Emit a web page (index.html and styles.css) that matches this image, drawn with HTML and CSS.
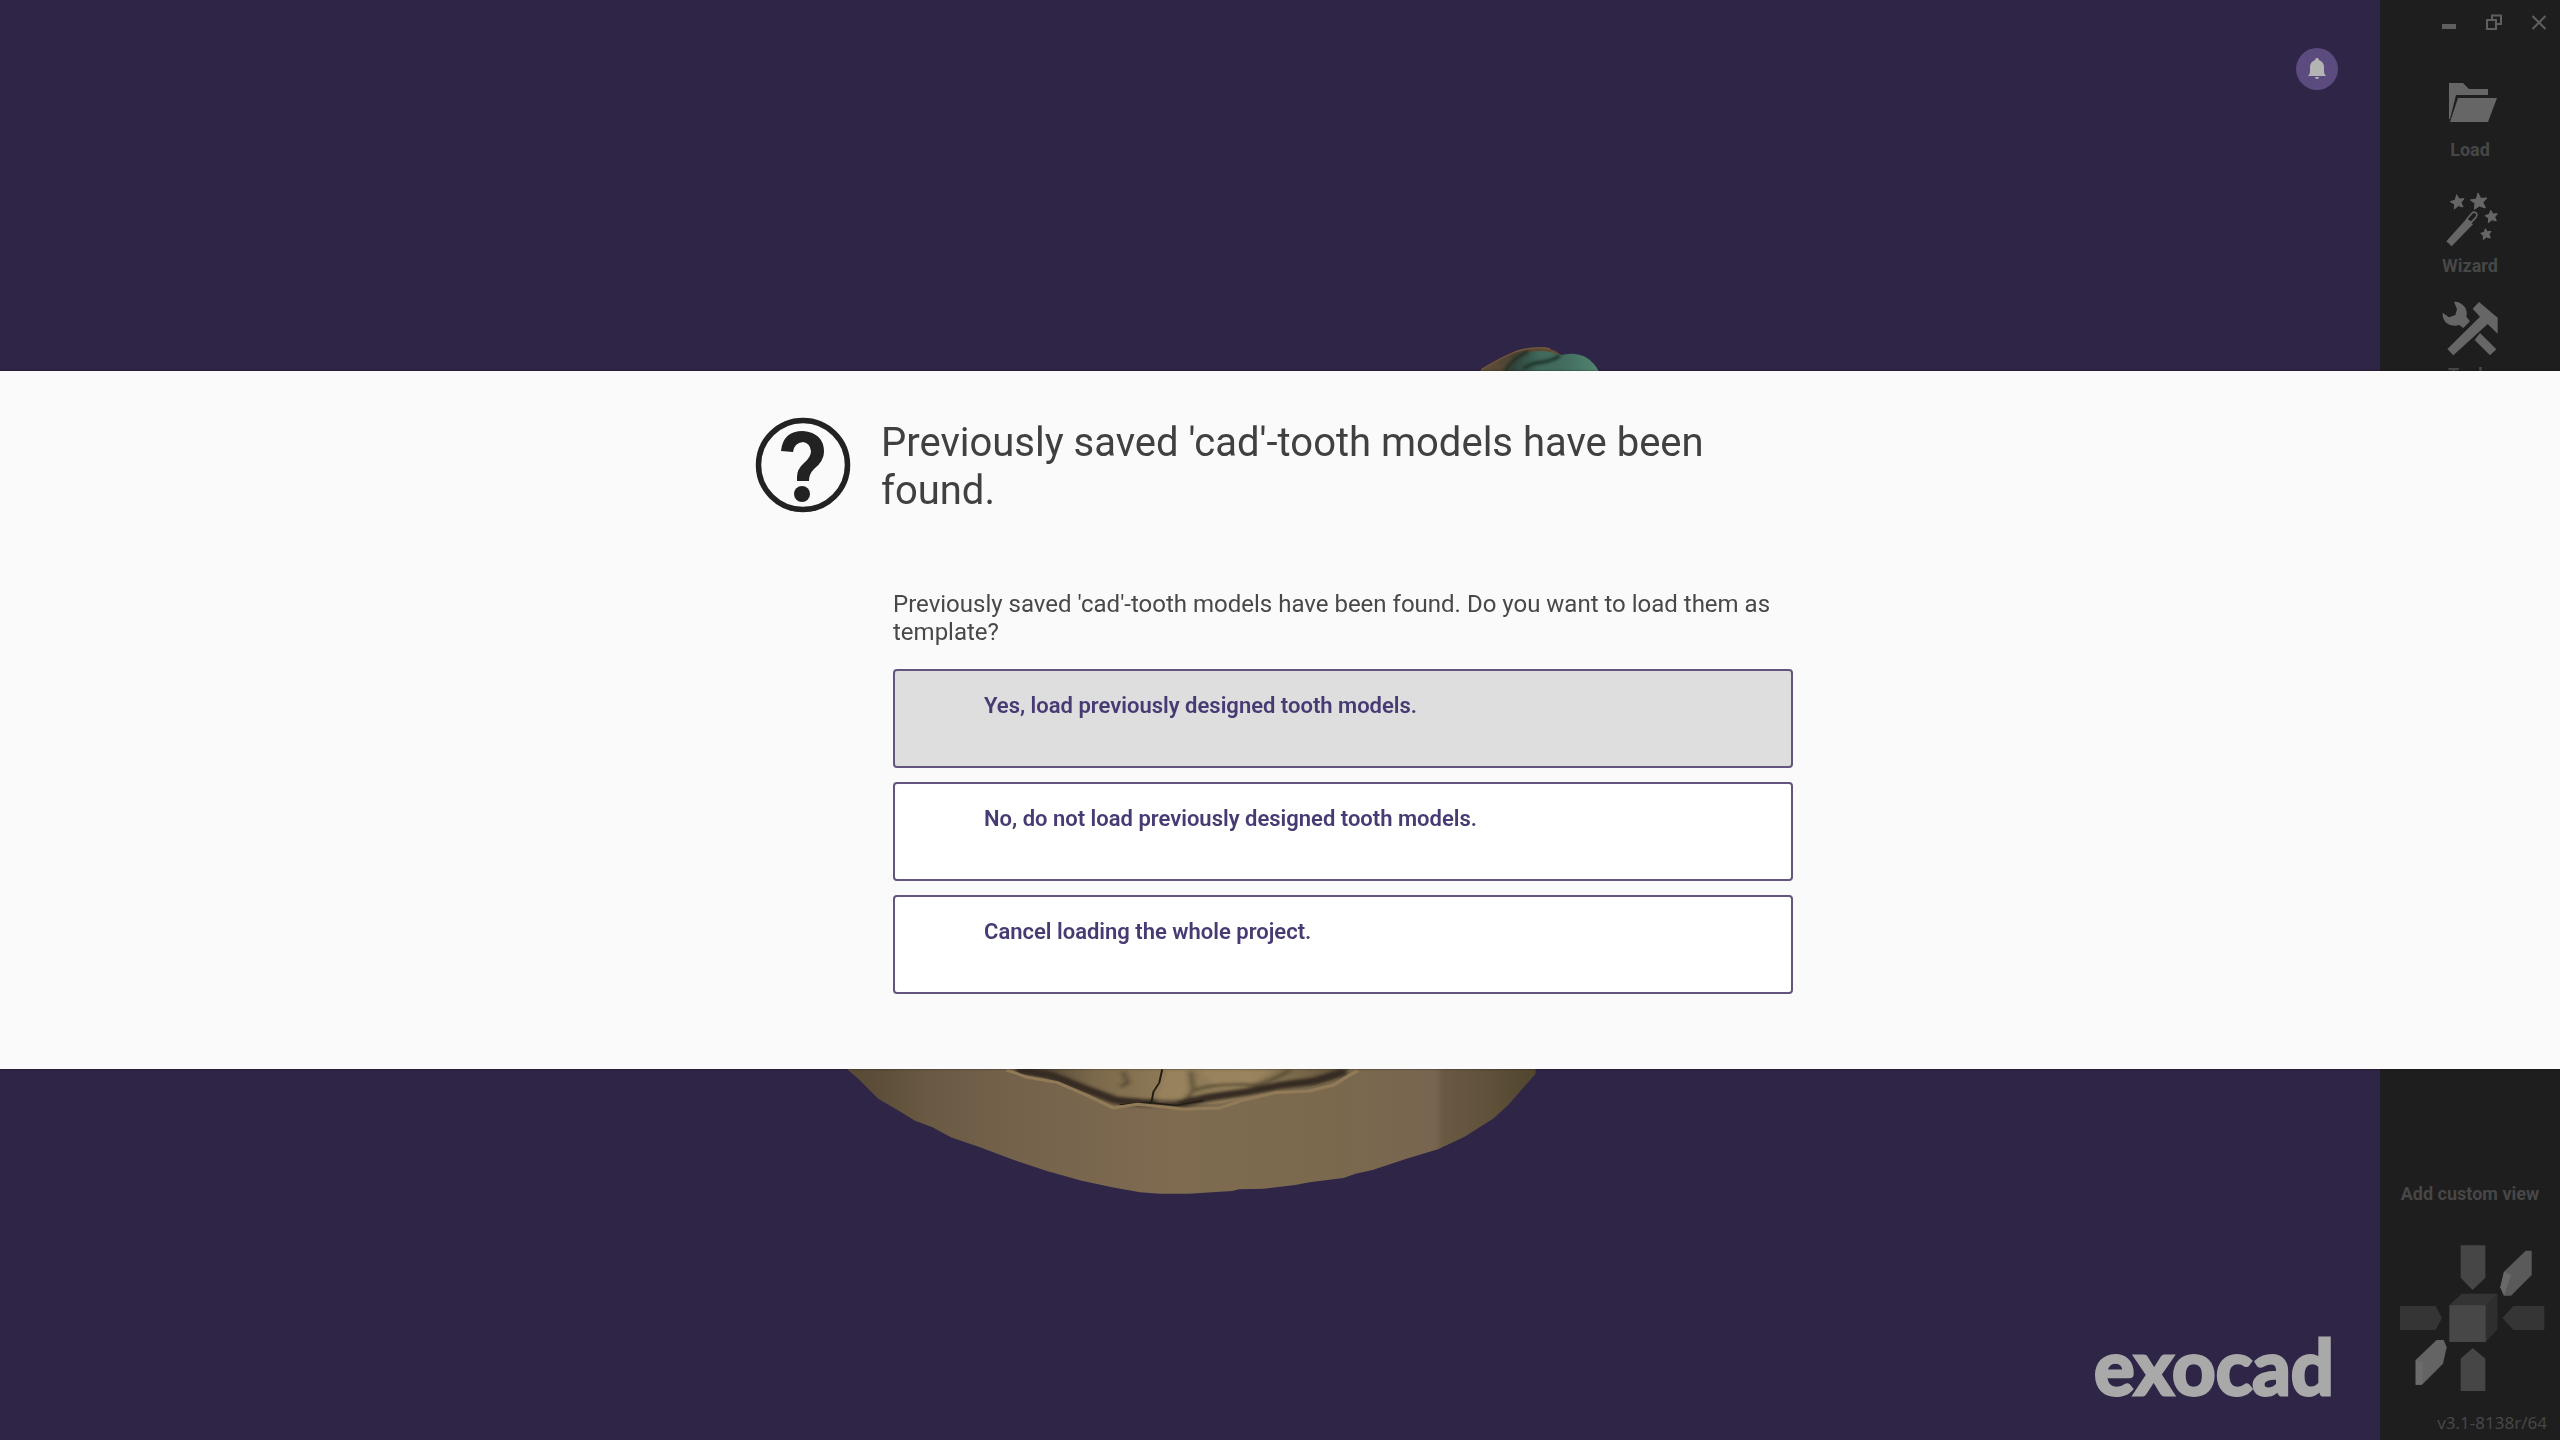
FILE: index.html
```html
<!DOCTYPE html>
<html lang="en">
<head>
<meta charset="utf-8">
<title>exocad</title>
<link rel="stylesheet" href="styles.css">
</head>
<body>
<div class="app">
  <main class="viewport">
    <svg class="model" viewBox="0 0 2380 1440" preserveAspectRatio="xMidYMid slice" aria-hidden="true">
      <defs>
        <linearGradient id="base" x1="0" x2="1" y1="0" y2="0">
          <stop offset="0" stop-color="#584a36"/>
          <stop offset=".05" stop-color="#5b4d38"/>
          <stop offset=".13" stop-color="#6a5a43"/>
          <stop offset=".25" stop-color="#75624c"/>
          <stop offset=".48" stop-color="#7e6b50"/>
          <stop offset=".7" stop-color="#7b694e"/>
          <stop offset=".855" stop-color="#776550"/>
          <stop offset=".865" stop-color="#6b5a43"/>
          <stop offset=".93" stop-color="#5f513a"/>
          <stop offset="1" stop-color="#51452f"/>
        </linearGradient>
        <linearGradient id="floor" x1="0" x2="1" y1="0" y2="0">
          <stop offset="0" stop-color="#3b3226"/>
          <stop offset=".25" stop-color="#7b694b"/>
          <stop offset=".45" stop-color="#8d7956"/>
          <stop offset=".7" stop-color="#927e5a"/>
          <stop offset="1" stop-color="#5c4e38"/>
        </linearGradient>
        <linearGradient id="gum" x1="0" x2="1" y1="0" y2="0">
          <stop offset="0" stop-color="#66503a"/>
          <stop offset=".4" stop-color="#4c4232"/>
          <stop offset="1" stop-color="#6a5037"/>
        </linearGradient>
        <linearGradient id="crown" x1="0" x2="1" y1="0" y2="0">
          <stop offset="0" stop-color="#2b3d35"/>
          <stop offset=".35" stop-color="#41695b"/>
          <stop offset=".6" stop-color="#426c5e"/>
          <stop offset="1" stop-color="#528672"/>
        </linearGradient>
        <filter id="soft" x="-10%" y="-30%" width="120%" height="160%"><feGaussianBlur stdDeviation="5"/></filter>
      </defs>
      <g transform="translate(1460 330) scale(.3333)">
        <path fill="url(#gum)" d="M58 130L62 120L110 92L160 66L205 53L255 51L285 62L310 78V130Z"/>
        <path fill="url(#crown)" d="M145 130Q168 84 210 67Q250 55 300 76Q345 64 378 82Q404 98 420 130Z"/>
        <path fill="none" stroke="#1f332c" stroke-width="10" filter="url(#soft)" d="M135 124Q160 82 205 64M190 116Q220 96 250 96Q285 90 300 76"/>
        <path fill="none" stroke="#735a3b" stroke-width="4" d="M64 119Q120 84 165 66Q215 48 270 56"/>
      </g>
      <g transform="translate(820 1050) scale(.4847 .3333)">
        <path fill="url(#base)" d="M40 30L58 60L80 88L120 146L160 180L196 212L232 232L270 262L330 292L400 330L470 364L540 392L600 411L660 427L700 431L760 431L850 423L865 418L915 416L980 405L1010 397L1080 384L1105 371L1140 360L1210 326L1275 298L1330 260L1390 205L1420 165L1450 115L1476 72L1478 30Z"/>
        <path fill="url(#floor)" d="M385 30L410 62L500 98L560 140L615 170L660 162L740 167L830 160L900 138L1010 110L1060 88L1100 50V30Z"/>
        <g filter="url(#soft)" fill="none" stroke="#342b20">
          <path stroke-width="22" d="M405 60L475 75L550 118L610 151L665 158L750 160L800 143L880 126L950 106L1020 93L1085 64"/>
          <path stroke-width="8" opacity=".6" d="M765 65L770 120L750 160M625 65L635 98L620 110M775 120Q820 95 900 105Q945 85 970 60"/>
        </g>
        <path fill="#a08a63" opacity=".5" filter="url(#soft)" d="M715 60H755L760 125L735 158H692ZM785 60H940L890 98L810 102Z"/>
        <path fill="none" stroke="#211b14" stroke-width="4" d="M706 58L700 98L688 125L684 156M618 164L680 158L735 166L790 152"/>
        <path fill="none" stroke="#917a57" stroke-width="9" stroke-linejoin="round" d="M385 60L425 81L490 98L550 136L605 174L655 163L705 170L750 178L825 174L870 152L940 128L1010 123L1060 105L1090 78L1110 62"/>
      </g>
    </svg>
    <button class="bell" type="button" aria-label="Notifications">
      <svg viewBox="0 0 20 22" width="20" height="22"><path fill="#b4b4b4" d="M8 2a2 2 0 0 1 4 0Q17 4 17 9V14Q17 16 19 18H1Q3 16 3 14V9Q3 4 8 2ZM8 19H12A2 2 0 0 1 8 19Z"/></svg>
    </button>
    <div class="brand">exocad</div>
  </main>

  <aside class="sidebar">
    <div class="window-controls">
      <button type="button" aria-label="Minimize"><svg viewBox="0 0 16 16" width="16" height="16"><path fill="#5f5f5f" d="M1 10H15V15H1Z"/></svg></button>
      <button type="button" aria-label="Restore"><svg viewBox="0 0 16 16" width="16" height="16"><path fill="none" stroke="#5f5f5f" stroke-width="2" d="M1 6H10V15H1ZM6 5V1.500H15V10H11"/></svg></button>
      <button type="button" aria-label="Close"><svg viewBox="0 0 16 16" width="16" height="16"><path fill="none" stroke="#5f5f5f" stroke-width="2" d="M1.500 2L14.500 15M14.500 2L1.500 15"/></svg></button>
    </div>
    <nav class="tools">
      <button class="tool tool-load" type="button">
        <svg viewBox="0 0 56 56" width="56" height="56"><path fill="#666" d="M7 7H21L27 13H46V19H14L8 43H7ZM16 22H55L46 46H8Z"/></svg>
        <span>Load</span>
      </button>
      <button class="tool" type="button">
        <svg viewBox="245 36 168 168" width="56" height="56">
          <path fill="#666" d="M258 184L318 117L338 133L274 199Z"/>
          <path fill="none" stroke="#666" stroke-width="5" stroke-linejoin="round" d="M319 118L336 98Q343 94 349 101Q352 106 347 112L333 127Z"/>
          <g fill="#666" stroke="#666" stroke-width="3">
            <path d="M289 44L296 57L311 56L302 68L308 81L294 77L282 87L283 73L270 65L285 60Z"/>
            <path d="M353 39L361 55L380 54L368 67L375 84L357 78L342 88L344 70L330 60L348 57Z"/>
            <path d="M391 91L398 102L411 101L403 111L408 123L395 119L384 128L385 114L374 107L387 103Z"/>
            <path d="M375 146L381 155L392 154L386 163L390 174L378 171L369 179L369 167L361 160L372 157Z"/>
          </g>
        </svg>
        <span>Wizard</span>
      </button>
      <button class="tool" type="button">
        <svg viewBox="246 363 168 168" width="56" height="56">
          <path fill="#666" d="M282 365Q302 364 315 382Q323 397 319 410L330 424L310 444L298 435Q276 442 258 428Q246 414 248 398L267 412L286 405L291 388Z"/>
          <path fill="#666" d="M360 459L409 508L390 526L344 480Z"/>
          <path fill="#666" d="M357 366L413 413V461L383 432L280 526L262 507L360 410L338 386Z"/>
        </svg>
        <span>Tools</span>
      </button>
    </nav>
    <div class="views">
      <button class="add-view" type="button">Add custom view</button>
      <svg class="cube" viewBox="90 250 435 450" width="145" height="150" role="img" aria-label="View directions">
        <path fill="#464646" d="M272 257H346V354L308 391L272 354ZM308 565L346 597V694H272V597Z"/>
        <path fill="#353535" d="M90 439H197L216 475L197 511H90ZM397 475L430 439H523V511H430Z"/>
        <path fill="#343434" d="M238 437L275 402H382V508L347 547Z"/>
        <path fill="#2e2e2e" d="M347 437L382 402V508L347 547Z"/>
        <path fill="#474747" d="M238 437H347V547H238Z"/>
        <path fill="#5a5a5a" d="M467 273H485V346L423 408H402L391 383L402 336Z"/>
        <path fill="#696969" d="M402 336L423 346L402 408L391 383Z"/>
        <path fill="#646464" d="M200 541H221L230 563L219 612L156 675H137V601Z"/>
        <path fill="#6b6b6b" d="M137 601L160 608L156 675H137Z"/>
      </svg>
      <p class="version">v3.1-8138r/64</p>
    </div>
  </aside>
</div>

<div class="overlay">
  <section class="dialog" role="dialog" aria-modal="true" aria-labelledby="dialog-title">
    <div class="dialog-body">
      <svg class="question" viewBox="0 0 96 96" width="96" height="96" aria-hidden="true">
        <circle cx="48" cy="48" r="44.500" fill="none" stroke="#222" stroke-width="5.500"/>
        <path fill="#222" d="M26 34Q28 14 48 14Q69 16 69 35Q69 44 59 52Q54 57 54 64H42V60Q42 52 49 46Q56 40 56 34Q55 26 48 25Q39 26 38 35Z"/>
        <circle cx="47" cy="77" r="8" fill="#222"/>
      </svg>
      <h1 id="dialog-title">Previously saved 'cad'-tooth models have been found.</h1>
      <div class="choices">
        <p>Previously saved 'cad'-tooth models have been found. Do you want to load them as template?</p>
        <button class="choice choice-active" type="button">Yes, load previously designed tooth models.</button>
        <button class="choice" type="button">No, do not load previously designed tooth models.</button>
        <button class="choice" type="button">Cancel loading the whole project.</button>
      </div>
    </div>
  </section>
</div>
</body>
</html>
```
FILE: styles.css
```css
* {
  box-sizing: border-box;
}

body {
  margin: 0;
  background: #2f2546;
  font-family: Roboto, "Noto Sans", sans-serif;
}

button {
  border: 0;
  padding: 0;
  background: none;
  color: inherit;
  font: inherit;
}

svg {
  display: block;
}

.app {
  display: grid;
  grid-template-columns: minmax(0, 1fr) 180px;
  min-height: 100vh;
}

/* 3D viewport */
.viewport {
  position: relative;
  display: flex;
  flex-direction: column;
  justify-content: space-between;
  align-items: flex-end;
  padding: 48px 42px 34px;
  overflow: hidden;
}

.model {
  position: absolute;
  inset: 0;
  width: 100%;
  height: 100%;
}

.bell {
  position: relative;
  display: grid;
  place-items: center;
  width: 42px;
  height: 42px;
  border-radius: 50%;
  background: #5b4b7e;
}

.brand {
  position: relative;
  padding-right: 4px;
  color: #a9a9a9;
  font-family: Lato, "Liberation Sans", sans-serif;
  font-size: 76px;
  font-weight: 700;
  line-height: 80px;
  -webkit-text-stroke: 3px #a9a9a9;
  stroke-linejoin: round;
}

/* Sidebar */
.sidebar {
  display: flex;
  flex-direction: column;
  background: #1e1e1e;
  color: #474747;
}

.window-controls {
  display: flex;
  justify-content: flex-end;
  gap: 29px;
  padding: 14px 13px 0;
}

.tools {
  display: flex;
  flex-direction: column;
  align-items: center;
  gap: 25px;
  padding-top: 46px;
}

.tool {
  display: flex;
  flex-direction: column;
  align-items: center;
  gap: 8px;
  font-size: 18px;
  font-weight: 700;
  line-height: 20px;
}

.tool-load {
  margin-bottom: 7px;
}

.views {
  display: flex;
  flex-direction: column;
  align-items: center;
  margin-top: auto;
}

.add-view {
  font-size: 18px;
  font-weight: 700;
  line-height: 20px;
}

.cube {
  margin: 39px 0 18px 4px;
}

.version {
  align-self: flex-end;
  margin: 0;
  padding: 0 13px 5px;
  font-family: "Noto Sans", sans-serif;
  font-size: 17px;
  line-height: 24px;
}

/* Message dialog */
.overlay {
  position: fixed;
  inset: 0;
  display: flex;
  align-items: center;
}

.dialog {
  width: 100%;
  padding: 46px 40px 75px;
  background: #fafafa;
  box-shadow: 0 0 2px #00000080;
}

.dialog-body {
  display: grid;
  grid-template-columns: 96px minmax(0, 912px);
  column-gap: 30px;
  justify-content: center;
  padding-right: 12px;
}

h1 {
  margin: 0;
  padding: 2px 60px 0 0;
  color: #404040;
  font-size: 40px;
  font-weight: 400;
  line-height: 48px;
}

.choices {
  grid-column: 2;
  display: flex;
  flex-direction: column;
  gap: 14px;
  padding: 75px 0 0 12px;
}

.choices p {
  margin: 0 0 9px;
  color: #484848;
  font-size: 24px;
  line-height: 28px;
}

.choice {
  height: 99px;
  padding: 0 89px 26px;
  border: 2px solid #64557f;
  border-radius: 4px;
  background: #fff;
  color: #483a73;
  font-size: 22px;
  font-weight: 600;
  text-align: left;
}

.choice-active {
  background: #dedede;
}
```
